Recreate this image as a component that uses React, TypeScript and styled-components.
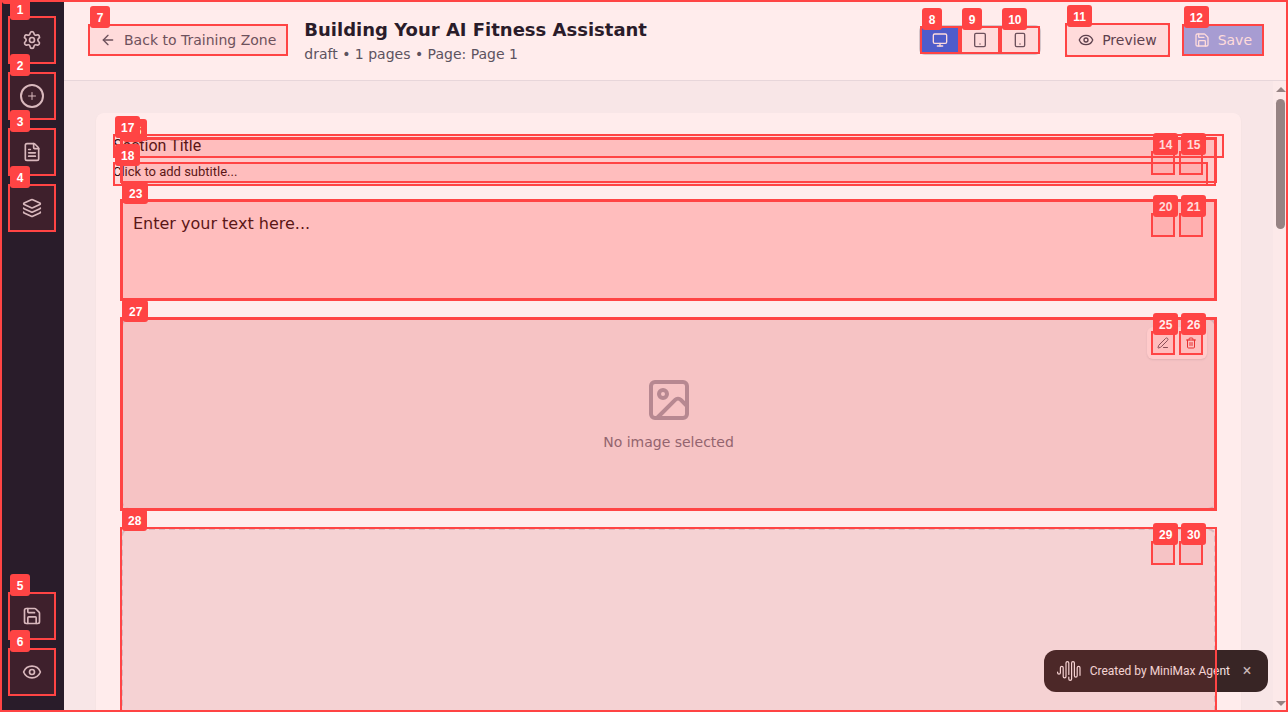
import React from "react";
import styled, { createGlobalStyle, css } from "styled-components";
import {
  ArrowLeft,
  Eye,
  FileText,
  Image as ImageIcon,
  Layers,
  Monitor,
  PenLine,
  Plus,
  Save,
  Settings,
  Smartphone,
  Tablet,
  Trash2,
} from "lucide-react";

const RED = "#ff4444";

const GlobalStyle = createGlobalStyle`
  *, *::before, *::after { box-sizing: border-box; }
  body {
    margin: 0;
    font-family: "DejaVu Sans", sans-serif;
    color: #111827;
    background: #f8f9fa;
    overflow: hidden;
  }
  button { font: inherit; color: inherit; margin: 0; padding: 0; border: 0; background: none; cursor: pointer; }
  h1, h2, p { margin: 0; font-weight: 400; }
`;

/* Numbered outlines that label the interactive elements */

interface Edges {
  top?: number;
  right?: number;
  bottom?: number;
  left?: number;
}

const Outline = styled.span<{ $n: number; $e: Edges }>`
  position: absolute;
  top: ${(p) => p.$e.top ?? 0}px;
  right: ${(p) => p.$e.right ?? 0}px;
  bottom: ${(p) => p.$e.bottom ?? 0}px;
  left: ${(p) => p.$e.left ?? 0}px;
  z-index: ${(p) => p.$n + 10};
  border: 2px solid ${RED};
  background: rgba(255, 68, 68, 0.1);
  pointer-events: none;
`;

const PageOutline = styled(Outline)`
  position: fixed;
`;

const Tag = styled.span`
  position: absolute;
  top: -20px;
  left: 0;
  min-width: 20px;
  height: 22px;
  padding: 0 6px;
  border-radius: 3px;
  background: ${RED};
  color: #fff;
  font: bold 12px/24px "Liberation Sans", Arial, sans-serif;
  text-align: center;
`;

function Mark({ n, blank, ...edges }: { n: number; blank?: boolean } & Edges) {
  return (
    <Outline $n={n} $e={edges} aria-hidden="true">
      <Tag>{blank ? null : n}</Tag>
    </Outline>
  );
}

/* Page frame */

const Shell = styled.div`
  display: flex;
  height: 100vh;
`;

const Sidebar = styled.nav`
  display: flex;
  flex-direction: column;
  flex: none;
  gap: 8px;
  width: 64px;
  padding: 16px 8px;
  background: #111827;
`;

const SideButton = styled.button<{ $pushDown?: boolean }>`
  position: relative;
  display: grid;
  place-items: center;
  width: 48px;
  height: 48px;
  border-radius: 8px;
  color: #d1d5db;
  ${(p) => p.$pushDown && css`margin-top: auto;`}
`;

const PlusRing = styled.span`
  display: grid;
  place-items: center;
  width: 24px;
  height: 24px;
  border: 2px solid currentColor;
  border-radius: 50%;
`;

const Workspace = styled.div`
  display: flex;
  flex: 1;
  flex-direction: column;
  min-width: 0;
`;

const Header = styled.header`
  display: flex;
  flex: none;
  align-items: center;
  padding: 16px 24px;
  border-bottom: 1px solid #e5e7eb;
  background: #fff;
`;

const HeaderButton = styled.button<{ $kind: "plain" | "outlined" | "primary" }>`
  position: relative;
  display: flex;
  align-items: center;
  gap: 8px;
  padding: 6px 12px;
  border-radius: 6px;
  font-size: 14px;
  line-height: 20px;
  white-space: nowrap;
  color: #4b5563;
  ${(p) => p.$kind === "outlined" && css`border: 1px solid #d1d5db; color: #374151;`}
  ${(p) => p.$kind === "primary" && css`background: #92b1f5; color: #fff;`}
`;

const Heading = styled.div`
  flex: 1;
  min-width: 0;
  margin-left: 16px;
`;

const Title = styled.h1`
  font-size: 18px;
  font-weight: 700;
  line-height: 28px;
`;

const Meta = styled.p`
  font-size: 14px;
  line-height: 20px;
  color: #4b5563;
`;

const Actions = styled.div`
  display: flex;
  align-items: center;
  gap: 12px;
`;

const DeviceSwitch = styled.div`
  display: flex;
  margin-right: 12px;
  border: 1px solid #d1d5db;
  border-radius: 6px;
`;

const DeviceButton = styled.button<{ $active?: boolean }>`
  position: relative;
  display: grid;
  place-items: center;
  width: 40px;
  height: 28px;
  color: ${(p) => (p.$active ? "#fff" : "#4b5563")};
  background: ${(p) => (p.$active ? "#2563eb" : "transparent")};
`;

/* Canvas */

const Stage = styled.div`
  display: flex;
  flex: 1;
  min-height: 0;
`;

const Canvas = styled.main`
  flex: 1;
  min-width: 0;
  padding: 32px;
  overflow: hidden;
`;

const Sheet = styled.div`
  display: flex;
  flex-direction: column;
  gap: 16px;
  padding: 24px;
  border-radius: 8px;
  background: #fff;
  box-shadow: 0 1px 2px rgba(0, 0, 0, 0.05);
`;

const Block = styled.section`
  position: relative;
`;

const Titles = styled.div`
  display: flex;
  flex-direction: column;
  gap: 4px;
  margin: -3px -7px;
  color: #000;
  font-family: Roboto, sans-serif;
`;

const SectionTitle = styled.h2`
  position: relative;
  height: 24px;
  font-size: 16px;
  line-height: 24px;
`;

const SectionSubtitle = styled.p`
  position: relative;
  height: 24px;
  margin-right: 16px;
  font-size: 13px;
  line-height: 20px;
`;

const TextBody = styled.div`
  min-height: 100px;
  margin: 1px;
  padding: 12px;
  color: #000;
  font-size: 16px;
  line-height: 24px;
`;

const Placeholder = styled.div<{ $tall?: boolean }>`
  display: flex;
  flex-direction: column;
  align-items: center;
  justify-content: center;
  gap: 8px;
  height: ${(p) => (p.$tall ? 320 : 192)}px;
  margin: 1px;
  border: 2px dashed #d1d5db;
  border-radius: 8px;
  background: #f3f4f6;
  color: #9ca3af;
`;

const PlaceholderText = styled.p`
  font-size: 14px;
  line-height: 20px;
  color: #6b7280;
`;

const Tools = styled.div<{ $shown?: boolean }>`
  position: absolute;
  top: 10px;
  right: 10px;
  display: flex;
  gap: 4px;
  padding: 4px;
  border-radius: 6px;
  ${(p) =>
    p.$shown
      ? css`
          background: #fff;
          box-shadow: 0 1px 2px rgba(0, 0, 0, 0.1);
        `
      : css`
          svg { visibility: hidden; }
        `}
`;

const ToolButton = styled.button<{ $danger?: boolean }>`
  position: relative;
  display: grid;
  place-items: center;
  width: 24px;
  height: 24px;
  color: ${(p) => (p.$danger ? "#dc2626" : "#4b5563")};
`;

function BlockTools({ first, shown }: { first: number; shown?: boolean }) {
  return (
    <Tools $shown={shown}>
      <ToolButton aria-label="Edit">
        <PenLine size={12} />
        <Mark n={first} />
      </ToolButton>
      <ToolButton aria-label="Delete" $danger>
        <Trash2 size={12} />
        <Mark n={first + 1} />
      </ToolButton>
    </Tools>
  );
}

/* Scroll bar */

const Scrollbar = styled.div`
  display: flex;
  flex: none;
  flex-direction: column;
  align-items: center;
  width: 15px;
  padding: 6px 0;
  background: #fcfcfc;
`;

const Arrow = styled.span<{ $down?: boolean }>`
  border: 5px solid transparent;
  border-top-width: ${(p) => (p.$down ? 5 : 0)}px;
  border-bottom-width: ${(p) => (p.$down ? 0 : 5)}px;
  border-top-color: #8b8b8b;
  border-bottom-color: #8b8b8b;
  ${(p) => p.$down && css`margin-top: auto;`}
`;

const Thumb = styled.span`
  width: 9px;
  height: 21%;
  margin-top: 7px;
  border-radius: 5px;
  background: #8b8b8b;
`;

/* Credit toast */

const Toast = styled.aside`
  position: fixed;
  right: 20px;
  bottom: 20px;
  z-index: 5;
  display: flex;
  align-items: center;
  gap: 8px;
  height: 42px;
  padding: 0 12px;
  border-radius: 12px;
  background: #222;
  color: #f4f4f4;
  font-family: Roboto, sans-serif;
  font-size: 12px;
  line-height: 20px;
  white-space: nowrap;
`;

const CloseButton = styled.button`
  width: 18px;
  height: 18px;
  color: #c4c4c4;
  font: 16px/18px Roboto, sans-serif;
`;

function WaveLogo() {
  return (
    <svg width="26" height="22" viewBox="0 0 26 22" fill="none" stroke="currentColor" strokeWidth="1.2" strokeLinecap="round" aria-hidden="true">
      <path d="M1.600 12v.8a1.400 1.400 0 0 0 2.800 0V7.800a1.400 1.400 0 0 1 2.800 0v8.700a1.400 1.400 0 0 0 2.800 0V3a1.400 1.400 0 0 1 2.800 0v11.500" />
      <path d="M12.800 17v2a1.400 1.400 0 0 0 2.800 0V3a1.400 1.400 0 0 1 2.800 0v12.800a1.400 1.400 0 0 0 2.800 0V7.800a1.400 1.400 0 0 1 2.800 0v7.500" />
    </svg>
  );
}

export default function App() {
  return (
    <>
      <GlobalStyle />
      <Shell>
        <Sidebar aria-label="Editor">
          <SideButton aria-label="Settings">
            <Settings size={20} />
            <Mark n={1} />
          </SideButton>
          <SideButton aria-label="Add component">
            <PlusRing>
              <Plus size={12} />
            </PlusRing>
            <Mark n={2} />
          </SideButton>
          <SideButton aria-label="Pages">
            <FileText size={20} />
            <Mark n={3} />
          </SideButton>
          <SideButton aria-label="Layers">
            <Layers size={20} />
            <Mark n={4} />
          </SideButton>
          <SideButton aria-label="Save" $pushDown>
            <Save size={20} />
            <Mark n={5} />
          </SideButton>
          <SideButton aria-label="Preview">
            <Eye size={20} />
            <Mark n={6} />
          </SideButton>
        </Sidebar>

        <Workspace>
          <Header>
            <HeaderButton $kind="plain">
              <ArrowLeft size={16} />
              Back to Training Zone
              <Mark n={7} />
            </HeaderButton>
            <Heading>
              <Title>Building Your AI Fitness Assistant</Title>
              <Meta>draft • 1 pages • Page: Page 1</Meta>
            </Heading>
            <Actions>
              <DeviceSwitch>
                <DeviceButton aria-label="Desktop" $active>
                  <Monitor size={16} />
                  <Mark n={8} />
                </DeviceButton>
                <DeviceButton aria-label="Tablet">
                  <Tablet size={16} />
                  <Mark n={9} />
                </DeviceButton>
                <DeviceButton aria-label="Phone">
                  <Smartphone size={16} />
                  <Mark n={10} />
                </DeviceButton>
              </DeviceSwitch>
              <HeaderButton $kind="outlined">
                <Eye size={16} />
                Preview
                <Mark n={11} top={-1} right={-1} bottom={-1} left={-1} />
              </HeaderButton>
              <HeaderButton $kind="primary">
                <Save size={16} />
                Save
                <Mark n={12} />
              </HeaderButton>
            </Actions>
          </Header>

          <Stage>
            <Canvas>
              <Sheet>
                <Block>
                  <Titles>
                    <SectionTitle>
                      Section Title
                      <Mark n={17} />
                    </SectionTitle>
                    <SectionSubtitle>
                      Click to add subtitle...
                      <Mark n={18} />
                    </SectionSubtitle>
                  </Titles>
                  <BlockTools first={14} />
                  <Mark n={13} blank top={1} right={1} bottom={-3} left={1} />
                  <Mark n={16} />
                </Block>

                <Block>
                  <TextBody>Enter your text here...</TextBody>
                  <BlockTools first={20} />
                  <Mark n={19} blank />
                  <Mark n={22} blank />
                  <Mark n={23} top={1} right={1} bottom={1} left={1} />
                </Block>

                <Block>
                  <Placeholder>
                    <ImageIcon size={48} />
                    <PlaceholderText>No image selected</PlaceholderText>
                  </Placeholder>
                  <BlockTools first={25} shown />
                  <Mark n={24} blank />
                  <Mark n={27} top={1} right={1} bottom={1} left={1} />
                </Block>

                <Block>
                  <Placeholder $tall />
                  <BlockTools first={29} />
                  <Mark n={28} />
                </Block>
              </Sheet>
            </Canvas>
            <Scrollbar aria-hidden="true">
              <Arrow />
              <Thumb />
              <Arrow $down />
            </Scrollbar>
          </Stage>
        </Workspace>
      </Shell>

      <Toast>
        <WaveLogo />
        Created by MiniMax Agent
        <CloseButton aria-label="Close">×</CloseButton>
      </Toast>

      <PageOutline $n={0} $e={{}} aria-hidden="true">
        <Tag />
      </PageOutline>
    </>
  );
}
